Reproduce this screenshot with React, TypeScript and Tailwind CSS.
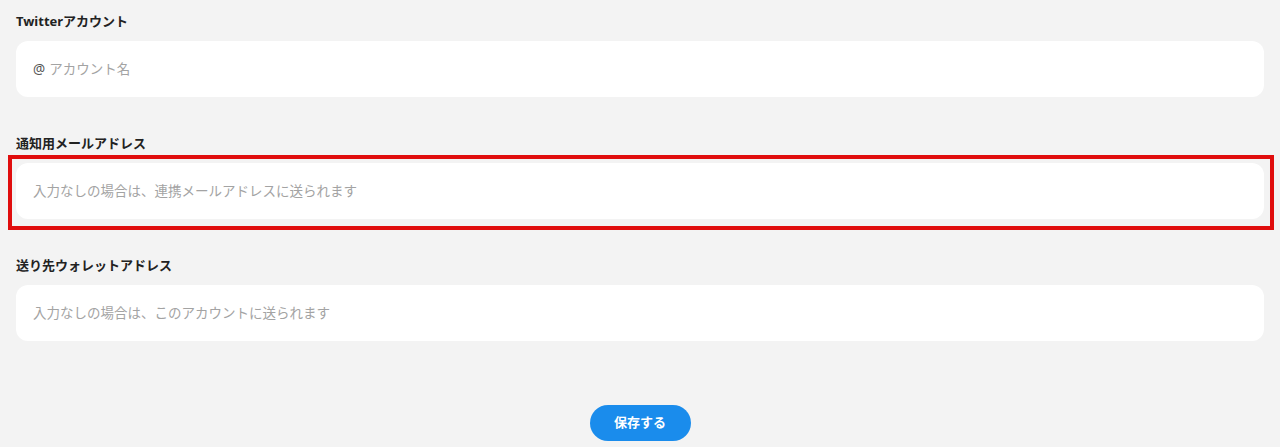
import React from "react";

const font = {
  fontFamily: '"Noto Sans", "Noto Sans CJK JP", sans-serif',
};

interface FieldProps {
  label: string;
  placeholder: string;
  prefix?: string;
  highlighted?: boolean;
}

function Field({ label, placeholder, prefix, highlighted }: FieldProps) {
  return (
    <div className="mb-[36px] last:mb-[35px]">
      <p className="text-[13px] leading-[20px] font-bold text-[#222] mb-[10px]">{label}</p>
      <div className="relative">
        <div className="flex items-center h-14 rounded-xl bg-white px-[17px] text-[13.5px]">
          {prefix && <span className="text-[#555] mr-1">{prefix}</span>}
          <input
            className="flex-1 bg-transparent outline-none placeholder:text-[#a3a3a3] text-[#333]"
            placeholder={placeholder}
            style={font}
          />
        </div>
        {highlighted && (
          <div className="absolute -left-2 -top-2 -right-2.5 -bottom-[11px] border-4 border-[#e00d0d] pointer-events-none" />
        )}
      </div>
    </div>
  );
}

export default function App() {
  return (
    <div className="min-h-[447px] bg-[#f3f3f3] px-4 pt-[11px]" style={font}>
      <div>
        <Field label="Twitterアカウント" prefix="@" placeholder="アカウント名" />
        <Field label="通知用メールアドレス" placeholder="入力なしの場合は、連携メールアドレスに送られます" highlighted />
        <Field label="送り先ウォレットアドレス" placeholder="入力なしの場合は、このアカウントに送られます" />
      </div>
      <div className="flex justify-center pt-[29px]">
        <button className="w-[101px] h-9 rounded-full bg-[#1a8cec] text-white text-[13px] font-bold">
          保存する
        </button>
      </div>
    </div>
  );
}
